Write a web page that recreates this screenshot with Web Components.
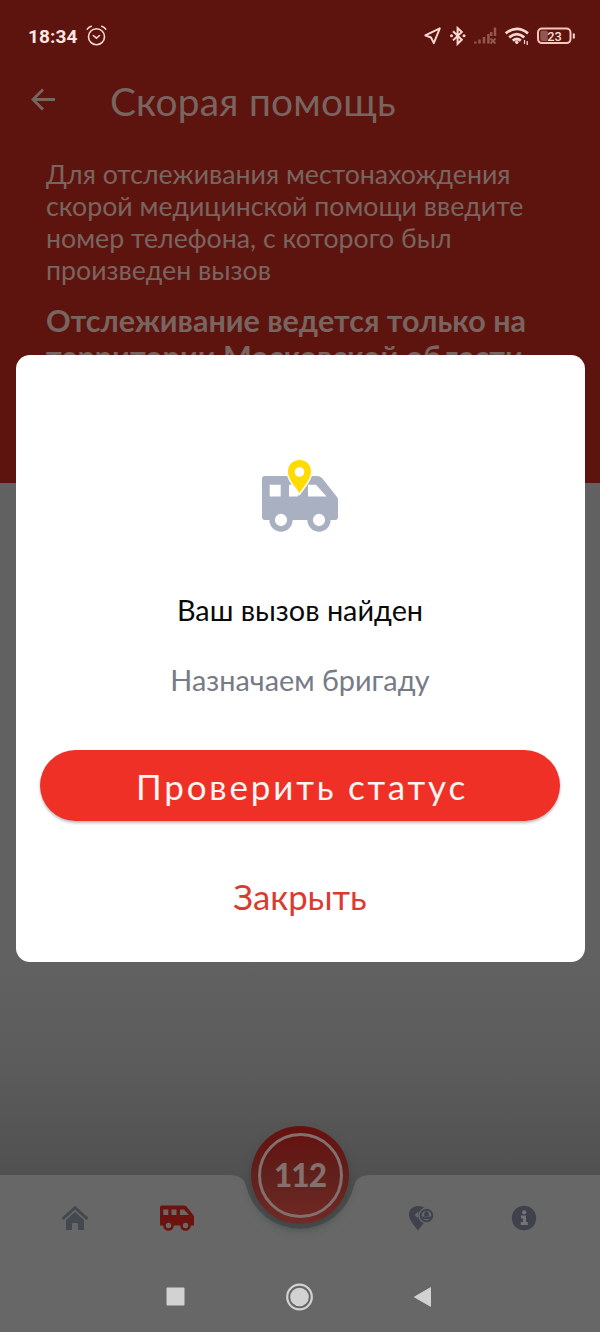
<!DOCTYPE html>
<html lang="ru">
<head>
<meta charset="utf-8">
<title>Скорая помощь</title>
<style>
html,body{margin:0;padding:0}
body{width:600px;height:1332px;overflow:hidden;background:#616161;font-family:Lato,sans-serif}
</style>
</head>
<body>
<tracking-screen></tracking-screen>
<script>
const define = (name, html) => {
  const template = document.createElement('template');
  template.innerHTML = html;
  customElements.define(name, class extends HTMLElement {
    constructor() {
      super();
      this.attachShadow({mode: 'open'}).append(template.content.cloneNode(true));
    }
  });
};

define('status-bar', `
<style>
:host{display:flex;align-items:center;height:72px;padding:0 24px 0 28px;box-sizing:border-box;color:#fbd9d3}
.time{font:700 19px/24px Roboto,sans-serif;letter-spacing:.1px;width:58px;color:#ffe6e0;white-space:nowrap;padding-top:1px}
.right{margin-left:auto;display:flex;align-items:center}
svg{display:block;flex:none}
</style>
<span class="time">18:34</span>
<svg width="22" height="22" viewBox="0 0 22 22" fill="none" stroke="currentColor" stroke-width="1.6" stroke-linecap="round"><circle cx="10.500" cy="11.700" r="8"/><path d="M7.300 10.500l3.100 2.600 3.100-2.600M1.300 4.200Q2.700 1.900 5.300 1.300M19.700 4.200Q18.300 1.900 15.700 1.300"/></svg>
<div class="right">
<svg width="152" height="24" viewBox="0 0 152 24" fill="none" stroke="currentColor">
<path d="M15.800 4.300L1.300 11.300l5.700 2.200 2.800 5.700z" stroke-width="1.900" stroke-linejoin="round"/>
<path d="M29 7.300l8.800 8.500-4.200 4V4l4.200 4-8.800 8.400" stroke-width="2"/>
<circle cx="27.500" cy="11.800" r="1.500" fill="currentColor" stroke="none"/><circle cx="40" cy="11.800" r="1.500" fill="currentColor" stroke="none"/>
<g stroke="#92574f" stroke-width="2.500"><path d="M51.300 19.500v-2M55.500 19.500v-4M60 19.500V13M64.400 19.500V10M71 12V3.500M67.200 12V8"/><path d="M66.500 14.500l5 5M71.500 14.500l-5 5" stroke-width="1.900"/></g>
<g stroke-width="2.700"><path d="M81.700 9.400Q92.800 .3 104 9.400M85.200 13.400Q92.800 7 100.300 13.400M88.800 16.600Q92.800 13.400 96.800 16.600"/><circle cx="92.800" cy="18.300" r="1.300" fill="currentColor" stroke-width="1"/></g>
<path d="M100.500 16v4M103.200 17v4" stroke-width="1.200"/>
<rect x="114" y="4.500" width="32.500" height="14.600" rx="4" stroke="#f4c6bf" stroke-width="2"/>
<rect x="116.300" y="6.500" width="7.500" height="10.600" rx="2" fill="#92574f" stroke="none"/>
<path d="M149.800 9.500v5" stroke-width="2"/>
<text x="130.500" y="16.700" text-anchor="middle" fill="#fbd9d3" stroke="none" font-family="Roboto,sans-serif" font-size="12.800" font-weight="500">23</text>
</svg></div>`);

define('app-header', `
<style>
:host{display:block;height:483px;background:#5e140e;color:#796560;overflow:hidden}
.bar{display:flex;align-items:center;height:58px;padding-left:30px}
h1{margin:-1px 0 0 54px;font-weight:400;font-size:38.900px;line-height:58px;letter-spacing:.2px;white-space:nowrap}
.text{padding:28px 46px 0}
p{margin:0;font-size:26.720px;line-height:32px;white-space:nowrap}
.note{margin-top:16px;font-size:30.500px;line-height:36px;font-weight:700}
</style>
<slot name="status"></slot>
<div class="bar"><svg width="26" height="26" viewBox="0 0 26 26" fill="none" stroke="currentColor" stroke-width="2.800"><path d="M25 11.500H3M13 1.500l-10 10 10 10"/></svg>
<h1><slot name="title"></slot></h1></div>
<div class="text"><p><slot></slot></p><p class="note"><slot name="note"></slot></p></div>`);

define('emergency-button', `
<style>
:host{display:flex;align-items:center;justify-content:center;width:98px;height:98px;border-radius:50%;box-sizing:border-box;background:linear-gradient(#67100d,#60201c 50%,#712a25);box-shadow:0 5px 8px #354040a0}
.ring{width:79px;height:79px;border:3px solid #81706d;border-radius:50%;display:flex;align-items:center;justify-content:center;font-size:31.500px;line-height:40px;font-family:Lato,sans-serif;font-weight:900;letter-spacing:-.9px;color:#84706d}
</style><div class="ring"><slot></slot></div>`);

define('bottom-nav', `
<style>
:host{display:block;position:relative;height:85px}
.bg{position:absolute;left:0;top:0}
.items{position:relative;display:grid;grid-template-columns:150px 53px 1fr 53px 150px;height:85px;align-items:center;justify-items:center}
.items svg{display:block}
emergency-button{position:absolute;left:251px;top:-49px}
</style>
<svg class="bg" width="600" height="157" viewBox="0 0 600 157"><path fill="#676767" d="M0 0H230Q243 0 246 11A55.500 55.500 0 0 0 354 11Q357 0 370 0H600V157H0z"/></svg>
<div class="items">
<svg width="28" height="26" viewBox="0 0 28 26"><path fill="none" stroke="#444851" stroke-width="3" d="M1.500 14L14 2.700 26.500 14"/><path fill="#444851" d="M5 15l9-8 9 8v10h-6v-6q0-1-1-1h-4q-1 0-1 1v6H5z"/></svg>
<svg width="34" height="26" viewBox="0 0 34 26"><path fill="#6d130f" d="M2 .5h22q1.500 0 2.500 1L34 11v9.500H0v-18q0-2 2-2z"/><path fill="#6b6764" d="M3.300 4.500h5v5.500h-5zM11.500 4.500h5v5.500h-5zM20 4.500h4l5 5.500h-9z"/><g fill="#6b6764" stroke="#6d130f" stroke-width="2.600"><circle cx="8.500" cy="20.500" r="4"/><circle cx="25.500" cy="20.500" r="4"/></g></svg>
<span></span>
<svg style="margin-left:-6px" width="26" height="26" viewBox="0 0 26 26"><path fill="#3f424d" d="M10 1C4.500 1 1 5 1 9.500 1 15 6 20 10 25.500c2-3 5-6 7-9.500L18 4Q15 1 10 1z"/><circle cx="18.500" cy="10.500" r="8" fill="#676767"/><circle cx="18.500" cy="10.500" r="5.800" fill="none" stroke="#3f424d" stroke-width="2"/><path d="M16.300 11V8.500a2.200 2.200 0 0 1 4.400 0V11zM13.500 11.500h10L21.500 14h-6z" fill="#3f424d"/><path fill="#676767" d="M6.500 10l4-3.500v7z"/></svg>
<svg style="margin-left:-2px" width="26" height="26" viewBox="0 0 26 26"><circle cx="13" cy="13" r="12.200" fill="#3f424d"/><path fill="#73737a" d="M10 10.500h5v6.500h1.800v3H9.700v-3H12v-3.500h-2z"/><circle cx="13.200" cy="7.300" r="2.100" fill="#73737a"/></svg>
</div>
<emergency-button>112</emergency-button>`);

define('system-nav', `
<style>
:host{display:flex;height:72px;align-items:center;justify-content:space-between;box-sizing:border-box;padding:1px 168px 0 166px;position:relative}svg{display:block}</style>
<svg width="19" height="19"><rect x=".5" y=".5" width="18" height="18" rx="1" fill="#d2d2d2"/></svg>
<svg width="28" height="28"><circle cx="13.500" cy="14" r="12.300" fill="none" stroke="#d2d2d2" stroke-width="2.200"/><circle cx="13.500" cy="14" r="9.300" fill="#d2d2d2"/></svg>
<svg width="18" height="20"><path fill="#d2d2d2" stroke="#d2d2d2" stroke-linejoin="round" d="M16.500 .7v18.600L.5 10z"/></svg>`);

define('pill-button', `
<style>:host{display:flex;align-items:center;justify-content:center;width:520px;height:71px;border-radius:36px;background:#ef3026;color:#fff5f2;font-size:35px;letter-spacing:2.800px;box-shadow:0 2px 3px #0004;box-sizing:border-box;padding:0 0 0 4px;white-space:nowrap}</style><slot></slot>`);

define('call-dialog', `
<style>
:host{display:flex;flex-direction:column;align-items:center;box-sizing:border-box;width:569px;height:607px;padding-top:102px;border-radius:14px;background:#fff;font-size:28.850px;line-height:34px;white-space:nowrap}
svg{display:block}
.title{margin-top:56px;color:#0a0a0a}
.sub{margin-top:36px;color:#777b87}
pill-button{margin-top:53px}
.close{margin-top:54px;font-size:34.700px;line-height:44px;color:#d93b30}
</style>
<svg width="80" height="80" viewBox="0 0 80 80"><path fill="#a9b0c2" d="M5 19h52q3 0 5 2l15 19q1 1 1 3v17q0 3-3 3H5q-3 0-3-3V22q0-3 3-3z"/><path fill="#fff" d="M9.700 27.700h11v11.700h-11zM29 27.700h12.500v6L37.500 39.400H29zM48 27.700h8l10.500 11.700H48z"/><g fill="#fff" stroke="#a9b0c2" stroke-width="5.500"><circle cx="21" cy="63" r="8.900"/><circle cx="59" cy="63" r="8.900"/></g><path fill="#ffdb00" stroke="#fff" stroke-width="3" paint-order="stroke" d="M39.500 3C32.500 3 28 8 28 14.500 28 22 34 28 39.500 36 45 28 51 22 51 14.500 51 8 46.500 3 39.500 3z"/><circle cx="39.500" cy="15" r="4.800" fill="#fff"/></svg>
<div class="title"><slot name="title"></slot></div>
<div class="sub"><slot name="subtitle"></slot></div>
<pill-button><slot name="action"></slot></pill-button>
<div class="close"><slot name="close"></slot></div>`);

define('tracking-screen', `
<style>
:host{display:flex;flex-direction:column;position:relative;width:600px;height:1332px;overflow:hidden;background:linear-gradient(#616161 0 960px,#5b5b5b 1070px,#4f4f4f 1190px)}
app-header{flex:none}
bottom-nav{margin-top:auto}
call-dialog{position:absolute;left:15.500px;top:355px}
</style>
<app-header><status-bar slot="status"></status-bar><span slot="title">Скорая помощь</span>Для отслеживания местонахождения<br>скорой медицинской помощи введите<br>номер телефона, с которого был<br>произведен вызов<span slot="note">Отслеживание ведется только на<br>территории Московской области</span></app-header>
<bottom-nav></bottom-nav>
<system-nav></system-nav>
<call-dialog><span slot="title">Ваш вызов найден</span><span slot="subtitle">Назначаем бригаду</span><span slot="action">Проверить статус</span><span slot="close">Закрыть</span></call-dialog>`);
</script>
</body>
</html>
